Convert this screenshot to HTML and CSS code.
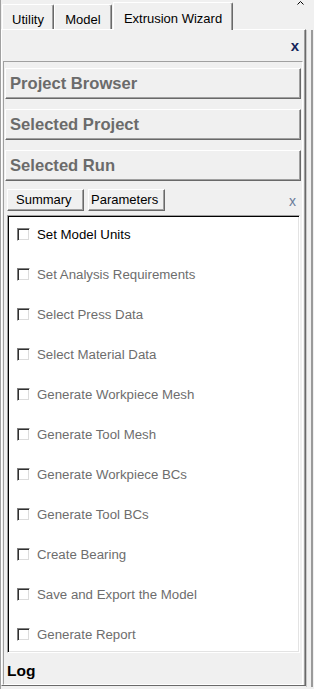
FILE: index.html
```html
<!DOCTYPE html>
<html>
<head>
<meta charset="utf-8">
<link rel="stylesheet" href="styles.css">
</head>
<body>
<div class="app">
  <div class="win">
    <div class="tabs">
      <div class="tab tab-utility">Utility</div>
      <div class="tab tab-model">Model</div>
      <div class="tab tab-active">Extrusion Wizard</div>
      <svg class="caret" width="7" height="5" viewBox="0 0 7 5"><polyline points="0.5,4.5 3.5,1.5 6.5,4.5" fill="none" stroke="#000" stroke-width="1"/></svg>
    </div>
    <div class="panel">
      <div class="panel-head"><span class="close">x</span></div>
      <div class="frame">
        <div class="bar">Project Browser</div>
        <div class="bar">Selected Project</div>
        <div class="bar">Selected Run</div>
        <div class="subrow">
          <div class="btn">Summary</div>
          <div class="btn">Parameters</div>
          <span class="subclose">x</span>
        </div>
        <div class="list">
          <div class="item item-on"><span class="cb"></span>Set Model Units</div>
          <div class="item"><span class="cb"></span>Set Analysis Requirements</div>
          <div class="item"><span class="cb"></span>Select Press Data</div>
          <div class="item"><span class="cb"></span>Select Material Data</div>
          <div class="item"><span class="cb"></span>Generate Workpiece Mesh</div>
          <div class="item"><span class="cb"></span>Generate Tool Mesh</div>
          <div class="item"><span class="cb"></span>Generate Workpiece BCs</div>
          <div class="item"><span class="cb"></span>Generate Tool BCs</div>
          <div class="item"><span class="cb"></span>Create Bearing</div>
          <div class="item"><span class="cb"></span>Save and Export the Model</div>
          <div class="item"><span class="cb"></span>Generate Report</div>
        </div>
        <div class="log">Log</div>
      </div>
    </div>
  </div>
  <div class="edge"></div>
</div>
</body>
</html>
```

FILE: styles.css
```css
* { box-sizing: border-box; }

html, body {
  margin: 0;
  padding: 0;
}

body {
  width: 314px;
  height: 689px;
  overflow: hidden;
  background: #f0f0f0;
  font-family: "Liberation Sans", Arial, sans-serif;
  font-size: 13px;
  color: #000;
}

.app {
  display: flex;
  height: 689px;
  border-left: 1px solid #a0a0a0;
}

.win {
  width: 305px;
  display: flex;
  flex-direction: column;
}

.edge {
  width: 7px;
  border-right: 2px solid #9a9a9a;
  border-left: 1px solid #c8c8c8;
  margin-top: 30px;
  height: 657px;
}

/* Tabs */
.tabs {
  position: relative;
  height: 29px;
  display: flex;
  align-items: flex-end;
  padding-left: 1px;
}

.tab {
  height: 25px;
  padding-top: 7px;
  text-align: center;
  line-height: 15px;
  border-top: 1px solid #fff;
  border-left: 1px solid #fff;
  border-right: 1px solid #696969;
  border-top-right-radius: 2px;
  box-shadow: inset -1px 0 #a0a0a0;
  background: #f0f0f0;
}

.tab-utility { width: 52px; }
.tab-model { width: 58px; }

.tab-active {
  width: 120px;
  height: 28px;
  margin-left: 1px;
  margin-bottom: -1px;
  padding-top: 8px;
  position: relative;
  z-index: 2;
}

.caret {
  position: absolute;
  left: 296px;
  top: 0;
}

/* Panel */
.panel {
  height: 657px;
  display: flex;
  flex-direction: column;
  border-top: 1px solid #fff;
  border-left: 1px solid #fff;
  border-right: 1px solid #696969;
  border-bottom: 1px solid #696969;
  box-shadow: inset -1px 0 #a0a0a0;
  padding: 0 2px 0 1px;
}

.panel-head {
  height: 31px;
  display: flex;
  justify-content: flex-end;
  padding-right: 4px;
}

.close {
  font-weight: bold;
  font-size: 15px;
  line-height: 31px;
  color: #13235a;
}

.frame {
  flex: 1;
  border-top: 1px solid #a0a0a0;
  border-left: 1px solid #a0a0a0;
  border-right: 1px solid #fff;
  border-bottom: 1px solid #fff;
  padding: 6px 1px 0 1px;
  display: flex;
  flex-direction: column;
}

.bar {
  height: 31px;
  margin-bottom: 10px;
  display: flex;
  align-items: center;
  padding-left: 4px;
  font-weight: bold;
  font-size: 16.6px;
  line-height: 19px;
  color: #6b6b6b;
  border-top: 1px solid #fff;
  border-left: 1px solid #fff;
  border-right: 1px solid #696969;
  border-bottom: 1px solid #696969;
  box-shadow: inset -1px -1px #a0a0a0;
}

.bar:nth-child(3) { margin-bottom: 8px; }

.subrow {
  display: flex;
  align-items: flex-start;
  height: 22px;
  padding-left: 2px;
  gap: 4px;
}

.btn {
  width: 77px;
  height: 22px;
  padding-left: 8px;
  line-height: 19px;
  border-top: 1px solid #fff;
  border-left: 1px solid #fff;
  border-right: 1px solid #696969;
  border-bottom: 1px solid #696969;
  box-shadow: inset -1px -1px #a0a0a0;
}

.btn + .btn { padding-left: 2px; }

.subclose {
  margin-left: auto;
  margin-right: 5px;
  font-size: 14px;
  line-height: 22px;
  margin-top: 1px;
  color: #6a7c9a;
}

.list {
  margin: 4px 1px 0 2px;
  height: 438px;
  background: #fff;
  border-top: 1px solid #a0a0a0;
  border-left: 1px solid #a0a0a0;
  border-right: 1px solid #fff;
  border-bottom: 1px solid #fff;
  box-shadow: inset 1px 1px #000, inset -1px -1px #e3e3e3;
  padding: 12px 0 0 9px;
  display: flex;
  flex-direction: column;
  gap: 27px;
}

.item {
  height: 13px;
  line-height: 13px;
  font-size: 13.25px;
  display: flex;
  align-items: flex-start;
  gap: 7px;
  color: #6d6d6d;
  white-space: nowrap;
}

.item-on { color: #000; }

.cb {
  width: 13px;
  height: 13px;
  flex: none;
  background: #fff;
  border-top: 1px solid #808080;
  border-left: 1px solid #808080;
  border-right: 1px solid #fff;
  border-bottom: 1px solid #fff;
  box-shadow: inset 1px 1px #303030, inset -1px -1px #dcdcdc;
}

.log {
  margin-top: 9px;
  padding-left: 2px;
  font-weight: bold;
  font-size: 15.5px;
  line-height: 18px;
  color: #000;
}
```
